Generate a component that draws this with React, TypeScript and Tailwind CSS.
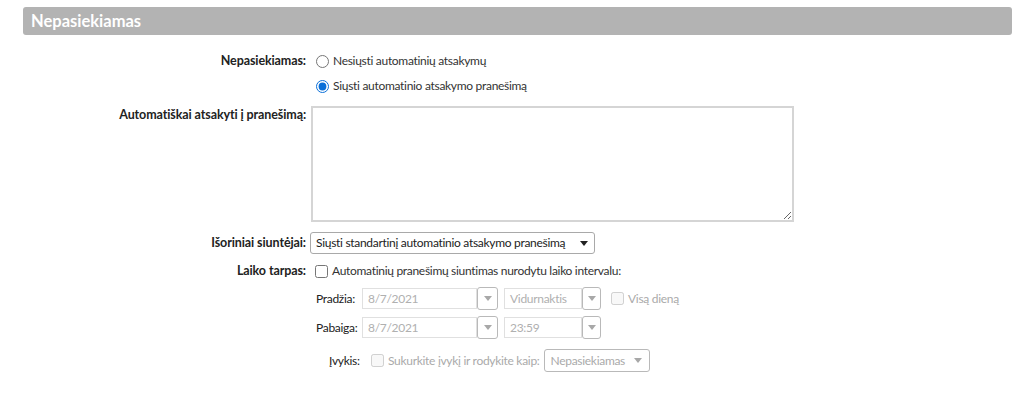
import React from "react";

const font = { fontFamily: 'Lato, "Open Sans", sans-serif' };

function Caret({ dark }: { dark?: boolean }) {
  return (
    <svg width="8" height="5" viewBox="0 0 8 5" className="shrink-0">
      <path d="M0 0h8L4 5z" fill={dark ? "#222" : "#a8a8a8"} />
    </svg>
  );
}

function Combo({ value, w, bw = 21 }: { value: string; w: string; bw?: number }) {
  return (
    <div className="flex items-center">
      <div className={`${w} h-[21px] border border-[#e0e0e0] px-[5px] flex items-center text-[#b0b0b0]`}>{value}</div>
      <div
        className="h-[23px] border border-[#b9b9b9] rounded-[3px] flex items-center justify-center"
        style={{ width: bw }}
      >
        <Caret />
      </div>
    </div>
  );
}

function Label({ children, className = "" }: { children: React.ReactNode; className?: string }) {
  return (
    <div className={`w-[306px] shrink-0 text-right font-bold text-[#222] text-[12.5px] tracking-[-0.1px] ${className}`}>
      {children}
    </div>
  );
}

export default function App() {
  return (
    <div
      className="w-[1024px] h-[395px] bg-white text-[12px] tracking-[-0.3px] text-[#333] whitespace-nowrap"
      style={font}
    >
      <div className="pt-[7px] pl-[23px] pr-[12px]">
        <div className="h-[28px] bg-[#b3b3b3] rounded-[3px] flex items-center pl-[8px] text-white font-bold text-[16.5px] tracking-normal">
          Nepasiekiamas
        </div>
      </div>

      <div className="mt-[16px] flex">
        <Label className="leading-[20px]">Nepasiekiamas:</Label>
        <div className="ml-[10px] flex flex-col gap-[5px]">
          <label className="flex items-center gap-[4px] h-[20px]">
            <input type="radio" name="r" className="m-0 w-[13px] h-[13px]" readOnly />
            <span>Nesiųsti automatinių atsakymų</span>
          </label>
          <label className="flex items-center gap-[4px] h-[20px]">
            <input type="radio" name="r" defaultChecked className="m-0 w-[13px] h-[13px] accent-[#0a6fd8]" />
            <span>Siųsti automatinio atsakymo pranešimą</span>
          </label>
        </div>
      </div>

      <div className="mt-[10px] flex">
        <Label>Automatiškai atsakyti į pranešimą:</Label>
        <textarea className="ml-[5px] w-[483px] h-[116px] border-2 border-[#d5d5d5] outline-none" />
      </div>

      <div className="mt-[10px] flex items-center">
        <Label>Išoriniai siuntėjai:</Label>
        <div className="ml-[4px] w-[285px] h-[22px] border border-[#a9a9a9] rounded-[3px] flex items-center justify-between pl-[5px] pr-[6px] text-[#222]">
          <span>Siųsti standartinį automatinio atsakymo pranešimą</span>
          <Caret dark />
        </div>
      </div>

      <div className="mt-[7px] flex items-center h-[20px]">
        <Label>Laiko tarpas:</Label>
        <label className="ml-[9px] flex items-center gap-[4px]">
          <input type="checkbox" className="m-0 w-[13px] h-[13px]" />
          <span>Automatinių pranešimų siuntimas nurodytu laiko intervalu:</span>
        </label>
      </div>

      <div className="mt-[6px] ml-[316px] flex flex-col gap-[6px]">
        <div className="flex items-center">
          <span className="w-[46px] text-[#222]">Pradžia:</span>
          <Combo value="8/7/2021" w="w-[115px]" />
          <div className="ml-[6px]">
            <Combo value="Vidurnaktis" w="w-[78px]" bw={19} />
          </div>
          <label className="ml-[10px] flex items-center gap-[4px] text-[#aaa]">
            <input type="checkbox" disabled className="m-0 w-[13px] h-[13px]" />
            <span>Visą dieną</span>
          </label>
        </div>
        <div className="flex items-center">
          <span className="w-[46px] text-[#222]">Pabaiga:</span>
          <Combo value="8/7/2021" w="w-[115px]" />
          <div className="ml-[6px]">
            <Combo value="23:59" w="w-[78px]" bw={19} />
          </div>
        </div>
      </div>

      <div className="mt-[10px] ml-[329px] flex items-center">
        <span className="w-[42px] text-[#222]">Įvykis:</span>
        <label className="flex items-center gap-[4px] text-[#aaa]">
          <input type="checkbox" disabled className="m-0 w-[13px] h-[13px]" />
          <span>Sukurkite įvykį ir rodykite kaip:</span>
        </label>
        <div className="ml-[4px] w-[106px] h-[23px] border border-[#b9b9b9] rounded-[3px] flex items-center justify-between pl-[6px] pr-[7px] text-[#aaa]">
          <span>Nepasiekiamas</span>
          <Caret />
        </div>
      </div>
    </div>
  );
}
